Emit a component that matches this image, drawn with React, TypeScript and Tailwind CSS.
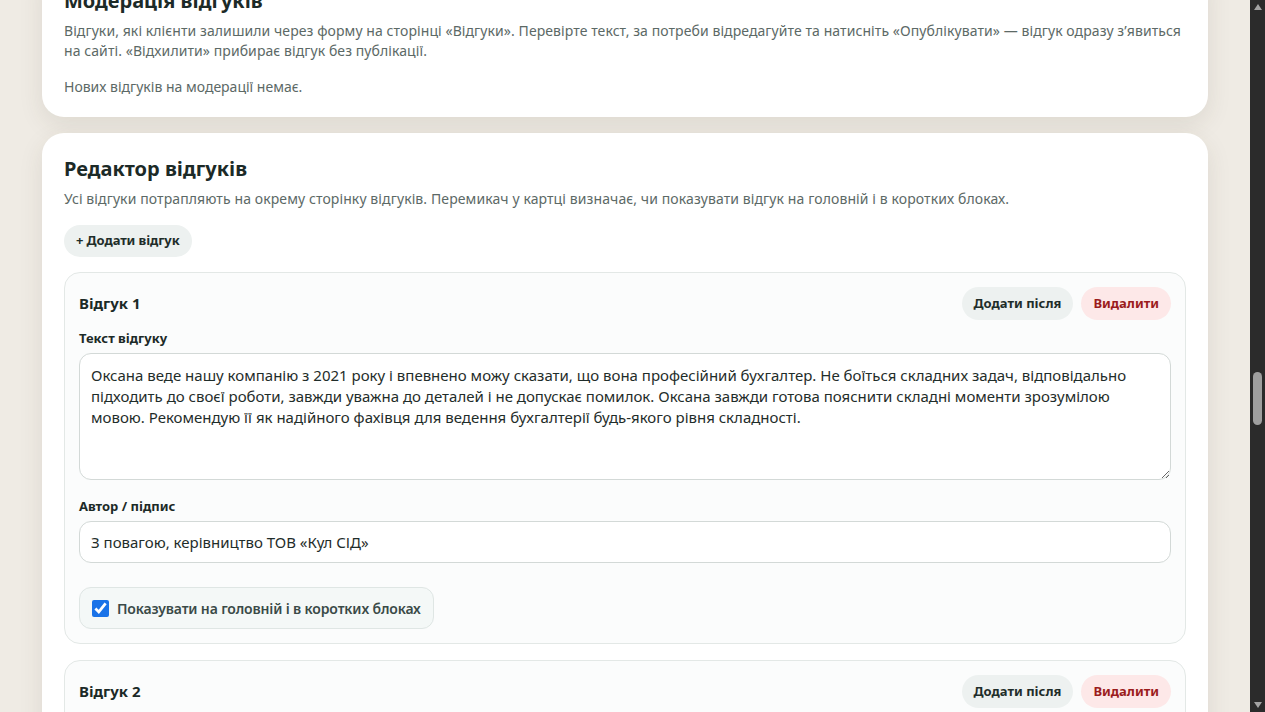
import React, { useState } from "react";

const font = "font-['Segoe_UI','Noto_Sans',sans-serif]";

type Review = { id: number; text: string; author: string; onMain: boolean };

const reviews: Review[] = [
  {
    id: 1,
    text: "Оксана веде нашу компанію з 2021 року і впевнено можу сказати, що вона професійний бухгалтер. Не боїться складних задач, відповідально підходить до своєї роботи, завжди уважна до деталей і не допускає помилок. Оксана завжди готова пояснити складні моменти зрозумілою мовою. Рекомендую її як надійного фахівця для ведення бухгалтерії будь-якого рівня складності.",
    author: "З повагою, керівництво ТОВ «Кул СІД»",
    onMain: true,
  },
  {
    id: 2,
    text: "",
    author: "",
    onMain: true,
  },
];

const ReviewCard: React.FC<{ review: Review }> = ({ review }) => {
  const [text, setText] = useState(review.text);
  const [author, setAuthor] = useState(review.author);
  const [onMain, setOnMain] = useState(review.onMain);

  return (
    <div className="rounded-2xl border border-[#e3e8e6] bg-[#fbfcfc] px-[14px] pt-[14px] pb-[14px]">
      <div className="flex items-center justify-between">
        <h3 className="text-[15px] font-bold text-[#1c2a27]">Відгук {review.id}</h3>
        <div className="flex gap-2">
          <button className="h-[33px] rounded-full bg-[#edf1f0] px-3 text-[13px] font-bold text-[#1f2d2a]">
            Додати після
          </button>
          <button className="h-[33px] rounded-full bg-[#fde8e8] px-3 text-[13px] font-bold text-[#9b1c1c]">
            Видалити
          </button>
        </div>
      </div>

      <label className="mt-[9px] block text-[13px] leading-[18px] font-bold text-[#1c2a27]">
        Текст відгуку
      </label>
      <textarea
        value={text}
        onChange={(e) => setText(e.target.value)}
        className="mt-[6px] block h-[127px] w-full resize-y rounded-xl border border-[#d3d9d7] bg-white px-[11px] pt-[11px] pb-[10px] text-[15px] leading-[21px] text-[#1f2d2a] outline-none"
      />

      <label className="mt-[17px] block text-[13px] leading-[18px] font-bold text-[#1c2a27]">
        Автор / підпис
      </label>
      <input
        value={author}
        onChange={(e) => setAuthor(e.target.value)}
        className="mt-[6px] block h-[42px] w-full rounded-xl border border-[#d3d9d7] bg-white px-[11px] text-[15px] text-[#1f2d2a] outline-none"
      />

      <label className="mt-6 inline-flex h-[42px] items-center gap-2 rounded-xl border border-[#dfe6e4] bg-[#f4f8f7] px-3 text-[14px] font-semibold tracking-[-0.15px] text-[#3a4a47]">
        <input
          type="checkbox"
          checked={onMain}
          onChange={() => setOnMain(!onMain)}
          className="h-[17px] w-[17px] accent-[#1a73e8]"
        />
        Показувати на головній і в коротких блоках
      </label>
    </div>
  );
};

export default function App() {
  return (
    <div className={`${font} h-[712px] overflow-hidden bg-[#efebe4] pr-[15px]`}>
      <div className="mx-auto flex max-w-[1166px] flex-col gap-4">
        <section className="mt-[-35px] rounded-[22px] bg-white px-[22px] pt-[22px] pb-5 shadow-[0_8px_24px_rgba(70,60,40,0.10)]">
          <h2 className="text-[20px] leading-7 font-bold text-[#1c2a27]">Модерація відгуків</h2>
          <p className="mt-[6px] text-[14px] leading-5 tracking-[0.08px] text-[#5c6966]">
            Відгуки, які клієнти залишили через форму на сторінці «Відгуки». Перевірте текст, за потреби відредагуйте та натисніть «Опублікувати» — відгук одразу з’явиться на сайті. «Відхилити» прибирає відгук без публікації.
          </p>
          <p className="mt-4 text-[14px] leading-5 text-[#5c6966]">Нових відгуків на модерації немає.</p>
        </section>

        <section className="rounded-[22px] bg-white px-[22px] pt-[22px] pb-6 shadow-[0_8px_24px_rgba(70,60,40,0.10)]">
          <h2 className="text-[20px] leading-7 font-bold text-[#1c2a27]">Редактор відгуків</h2>
          <p className="mt-[6px] text-[14px] leading-5 tracking-[0.1px] text-[#5c6966]">
            Усі відгуки потрапляють на окрему сторінку відгуків. Перемикач у картці визначає, чи показувати відгук на головній і в коротких блоках.
          </p>
          <button className="mt-4 h-8 rounded-full bg-[#edf1f0] px-3 text-[13px] font-bold tracking-[-0.1px] text-[#1f2d2a]">
            + Додати відгук
          </button>
          <div className="mt-[15px] flex flex-col gap-4">
            {reviews.map((r) => (
              <ReviewCard key={r.id} review={r} />
            ))}
          </div>
        </section>
      </div>

      {/* scrollbar */}
      <div className="fixed top-0 right-0 h-[712px] w-[15px] bg-[#2b2b2b]">
        <svg className="absolute top-[4px] left-[4px]" width="8" height="6" viewBox="0 0 8 6">
          <path d="M4 0 L8 6 L0 6 Z" fill="#a3a3a3" />
        </svg>
        <div className="absolute top-[372px] left-[3px] h-[53px] w-[9px] rounded-full bg-[#9f9f9f]" />
        <svg className="absolute bottom-[4px] left-[4px]" width="8" height="6" viewBox="0 0 8 6">
          <path d="M0 0 L8 0 L4 6 Z" fill="#a3a3a3" />
        </svg>
      </div>
    </div>
  );
}
